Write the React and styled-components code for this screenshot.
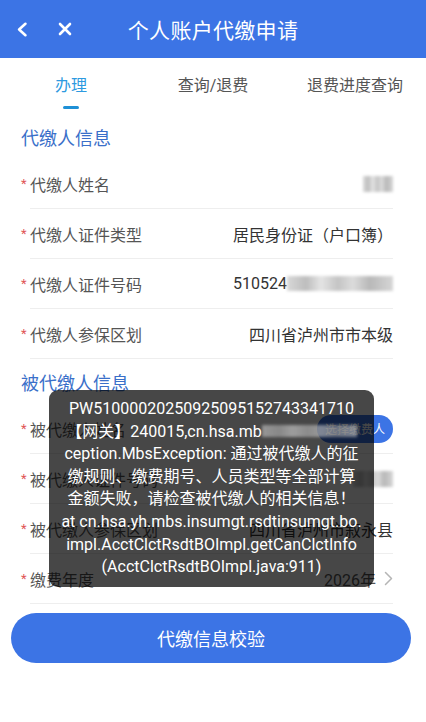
import React from 'react';
import styled, { createGlobalStyle } from 'styled-components';

const GlobalStyle = createGlobalStyle`
    html, body {
        margin: 0;
        padding: 0;
        background: #ffffff;
    }
    * {
        box-sizing: border-box;
    }
`

const Page = styled.div`
    position: relative;
    width: 426px;
    height: 722px;
    display: flex;
    flex-direction: column;
    background: #ffffff;
    font-family: Roboto, "Noto Sans CJK SC", sans-serif;
    overflow: hidden;
`

const Header = styled.div`
    display: flex;
    align-items: center;
    height: 58px;
    background: #3c74e5;
    color: #ffffff;
`

const HeaderSide = styled.div`
    width: 100px;
    display: flex;
    align-items: center;
    gap: 30px;
    padding-left: 17px;
`

const Title = styled.div`
    flex: 1;
    text-align: center;
    font-size: 21px;
    letter-spacing: 0.3px;
`

const Tabs = styled.div`
    display: grid;
    grid-template-columns: repeat(3, 1fr);
    height: 52px;
`

const Tab = styled.div`
    position: relative;
    display: flex;
    align-items: center;
    justify-content: center;
    font-size: 16px;
    color: ${p => (p.active ? '#2d9ae0' : '#555555')};

    &::after {
        content: '';
        display: ${p => (p.active ? 'block' : 'none')};
        position: absolute;
        left: 50%;
        bottom: 1px;
        width: 16px;
        height: 3px;
        margin-left: -8px;
        border-radius: 2px;
        background: #1e90d6;
    }
`

const SectionTitle = styled.div`
    display: flex;
    align-items: center;
    height: 45px;
    margin-top: ${p => (p.first ? '4px' : '0')};
    padding-left: 21px;
    font-size: 18px;
    color: #3a6fc9;
`

const Row = styled.div`
    display: flex;
    align-items: stretch;
    height: 50px;
    padding: 0 33px 0 21px;
`

const Star = styled.span`
    width: 9px;
    padding-top: 17px;
    font-size: 13px;
    color: #e05555;
`

const RowBody = styled.div`
    flex: 1;
    display: flex;
    align-items: center;
    justify-content: space-between;
    border-bottom: 1px solid #eeeeee;
`

const Label = styled.span`
    font-size: 16px;
    color: #555555;
`

const Value = styled.span`
    display: flex;
    align-items: center;
    font-size: 16px;
    color: #333333;
`

const Blur = styled.span`
    display: inline-block;
    width: ${p => p.w}px;
    height: ${p => p.h || 14}px;
    background: linear-gradient(90deg, #d8d8d8 0%, #bdbdbd 18%, #e4e4e4 32%, #c4c4c4 48%, #dcdcdc 62%, #b8b8b8 78%, #d6d6d6 100%);
    filter: blur(1.5px);
    opacity: ${p => p.o || 1};
`

const Pill = styled.span`
    display: inline-flex;
    align-items: center;
    height: 28px;
    padding: 0 8px;
    border-radius: 14px;
    background: #3c74e5;
    color: #ffffff;
    font-size: 12px;
`

const SubmitButton = styled.div`
    display: flex;
    align-items: center;
    justify-content: center;
    height: 50px;
    margin: 9px 15px 0 11px;
    border-radius: 25px;
    background: #3c74e5;
    color: #ffffff;
    font-size: 18px;
`

const Toast = styled.div`
    position: absolute;
    left: 49px;
    top: 390px;
    width: 325px;
    padding: 8px 6px;
    border-radius: 9px;
    background: rgba(0, 0, 0, 0.72);
    color: #ffffff;
    font-size: 16px;
    line-height: 22.6px;
    text-align: center;
`

const ToastLine = styled.div`
    white-space: nowrap;
`

const Chevron = ({ color = '#ffffff', size = 14, weight = 2.4 }) => (
    <svg width={size * 0.7} height={size} viewBox="0 0 10 14" fill="none">
        <polyline points="8,1.5 2,7 8,12.5" stroke={color} strokeWidth={weight} strokeLinecap="round" strokeLinejoin="round" />
    </svg>
)

const CloseIcon = () => (
    <svg width="14" height="14" viewBox="0 0 14 14" fill="none">
        <path d="M2 2 L12 12 M12 2 L2 12" stroke="#ffffff" strokeWidth="2.6" strokeLinecap="round" />
    </svg>
)

const Arrow = () => (
    <svg width="9" height="15" viewBox="0 0 9 15" fill="none" style={{ marginLeft: 8 }}>
        <polyline points="1.5,1.5 7.5,7.5 1.5,13.5" stroke="#b5b5b5" strokeWidth="1.5" strokeLinecap="round" strokeLinejoin="round" />
    </svg>
)

const Field = ({ label, children }) => (
    <Row>
        <Star>*</Star>
        <RowBody>
            <Label>{label}</Label>
            <Value>{children}</Value>
        </RowBody>
    </Row>
)

const App = () => {
    return (
        <Page>
            <GlobalStyle />
            <Header>
                <HeaderSide>
                    <Chevron size={15} />
                    <CloseIcon />
                </HeaderSide>
                <Title>个人账户代缴申请</Title>
                <HeaderSide />
            </Header>

            <Tabs>
                <Tab active>办理</Tab>
                <Tab>查询/退费</Tab>
                <Tab>退费进度查询</Tab>
            </Tabs>

            <SectionTitle first>代缴人信息</SectionTitle>
            <Field label="代缴人姓名">
                <Blur w={30} h={16} />
            </Field>
            <Field label="代缴人证件类型">居民身份证（户口簿）</Field>
            <Field label="代缴人证件号码">
                510524<Blur w={106} h={15} />
            </Field>
            <Field label="代缴人参保区划">四川省泸州市市本级</Field>

            <SectionTitle>被代缴人信息</SectionTitle>
            <Field label="被代缴人姓名">
                <Pill>选择缴费人</Pill>
            </Field>
            <Field label="被代缴人证件号码">
                <Blur w={40} h={16} />
            </Field>
            <Field label="被代缴人参保区划">四川省泸州市叙永县</Field>
            <Field label="缴费年度">
                <span style={{ color: '#555555' }}>2026年</span>
                <Arrow />
            </Field>

            <SubmitButton>代缴信息校验</SubmitButton>

            <Toast>
                <ToastLine>PW51000020250925095152743341710</ToastLine>
                <ToastLine>
                    【网关】240015,cn.hsa.mb<Blur w={95} h={12} o={0.55} />
                </ToastLine>
                <ToastLine>ception.MbsException: 通过被代缴人的征</ToastLine>
                <ToastLine>缴规则、缴费期号、人员类型等全部计算</ToastLine>
                <ToastLine>金额失败，请检查被代缴人的相关信息！</ToastLine>
                <ToastLine>at cn.hsa.yh.mbs.insumgt.rsdtinsumgt.bo.</ToastLine>
                <ToastLine>impl.AcctClctRsdtBOImpl.getCanClctInfo</ToastLine>
                <ToastLine>(AcctClctRsdtBOImpl.java:911)</ToastLine>
            </Toast>
        </Page>
    )
}

export default App
